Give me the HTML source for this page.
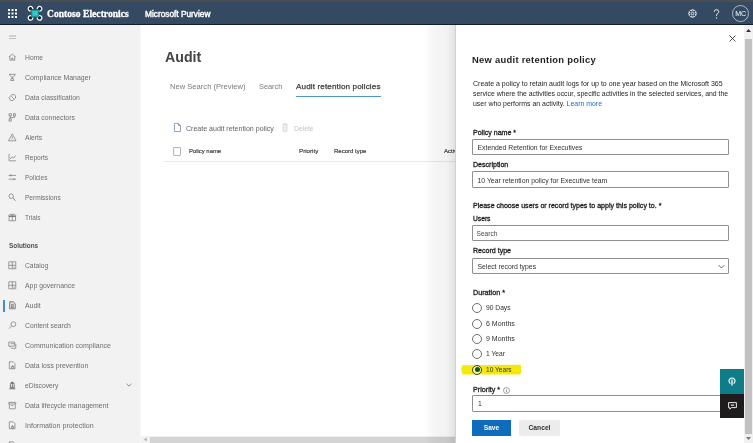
<!DOCTYPE html>
<html><head><meta charset="utf-8">
<style>
*{margin:0;padding:0;box-sizing:border-box}
html,body{width:753px;height:443px;overflow:hidden;background:#fff;-webkit-font-smoothing:antialiased;font-family:"Liberation Sans",sans-serif;color:#323130}
.a{position:absolute;white-space:nowrap}
.nav,.lbl,.inp,.rt,.a{will-change:transform}
.nav{position:absolute;left:25px;font-size:6.85px;color:#6e6e6e;line-height:10px;white-space:nowrap}
.lbl{position:absolute;left:17px;font-size:7.05px;-webkit-text-stroke:0.3px #1e1e1e;color:#1e1e1e;line-height:10px;white-space:nowrap}
.inp{position:absolute;left:16px;width:257px;border:1px solid #8f8f8f;border-radius:1px;padding-top:0.7px;font-size:6.85px;color:#323130;padding-left:4.5px;white-space:nowrap}
.rad{position:absolute;left:16px;width:10px;height:10px;border:1px solid #6e6e6e;border-radius:50%}
.rt{position:absolute;left:30px;font-size:6.7px;color:#323130;line-height:10px;white-space:nowrap}
</style></head><body>
<div class="a" style="left:0;top:0;width:753px;height:2px;background:#4b4e53"></div>
<div class="a" style="left:0;top:2px;width:753px;height:22px;background:#344a62"></div>
<div class="a" style="left:0;top:24px;width:753px;height:1px;background:#131e2a"></div>
<!-- waffle -->
<svg class="a" style="left:8px;top:9px" width="9" height="9" viewBox="0 0 9 9" fill="#fff">
<rect x="0" y="0" width="2" height="2"/><rect x="3.5" y="0" width="2" height="2"/><rect x="7" y="0" width="2" height="2"/>
<rect x="0" y="3.5" width="2" height="2"/><rect x="3.5" y="3.5" width="2" height="2"/><rect x="7" y="3.5" width="2" height="2"/>
<rect x="0" y="7" width="2" height="2"/><rect x="3.5" y="7" width="2" height="2"/><rect x="7" y="7" width="2" height="2"/>
</svg>
<!-- logo -->
<svg class="a" style="left:26px;top:5px" width="18" height="18" viewBox="0 0 18 18">
<circle cx="4.5" cy="3.7" r="2.3" fill="#16222e"/><circle cx="13.6" cy="3.7" r="2.3" fill="#16222e"/><circle cx="4.5" cy="12.9" r="2.3" fill="#16222e"/><circle cx="13.6" cy="12.9" r="2.3" fill="#16222e"/>
<path d="M5 4.4 Q9 5.4 13.1 4.4 Q12.1 8.3 13.1 12.2 Q9 11.2 5 12.2 Q6 8.3 5 4.4Z" fill="#1f9ea3"/>
<path d="M6.3 5.8 Q9 6.6 11.8 5.8 Q11.1 8.3 11.8 10.8 Q9 10 6.3 10.8 Q7 8.3 6.3 5.8Z" fill="#3cc9c6"/>
<path d="M4.90 5.97A2.3 2.3 0 1 1 6.77 4.10" fill="none" stroke="#fff" stroke-width="1.2"/>
<path d="M11.33 4.10A2.3 2.3 0 1 1 13.20 5.97" fill="none" stroke="#fff" stroke-width="1.2"/>
<path d="M6.77 12.50A2.3 2.3 0 1 1 4.90 10.63" fill="none" stroke="#fff" stroke-width="1.2"/>
<path d="M13.20 10.63A2.3 2.3 0 1 1 11.33 12.50" fill="none" stroke="#fff" stroke-width="1.2"/>
</svg>
<div class="a" style="left:47px;top:8px;font-family:'Liberation Serif',serif;font-weight:bold;font-size:9.5px;letter-spacing:0.05px;-webkit-text-stroke:0.3px #fff;color:#fff;line-height:12px">Contoso Electronics</div>
<div class="a" style="left:144.5px;top:8.5px;font-size:8.3px;-webkit-text-stroke:0.4px #fff;color:#fff;line-height:11px">Microsoft Purview</div>
<!-- header right icons -->
<svg class="a" style="left:688px;top:9px" width="9" height="9" viewBox="0 0 18 18"><path d="M14.24 7.01 L16.41 7.29 L16.41 10.71 L14.24 10.99 L14.11 11.30 L15.45 13.03 L13.03 15.45 L11.30 14.11 L10.99 14.24 L10.71 16.41 L7.29 16.41 L7.01 14.24 L6.70 14.11 L4.97 15.45 L2.55 13.03 L3.89 11.30 L3.76 10.99 L1.59 10.71 L1.59 7.29 L3.76 7.01 L3.89 6.70 L2.55 4.97 L4.97 2.55 L6.70 3.89 L7.01 3.76 L7.29 1.59 L10.71 1.59 L10.99 3.76 L11.30 3.89 L13.03 2.55 L15.45 4.97 L14.11 6.70Z" fill="none" stroke="#fff" stroke-width="1.7" stroke-linejoin="round"/><circle cx="9" cy="9" r="2.5" fill="none" stroke="#fff" stroke-width="1.6"/></svg>
<svg class="a" style="left:713px;top:8.5px" width="7" height="10" viewBox="0 0 7 10"><path d="M1.2 2.8C1.2 1.4 2.2 0.7 3.4 0.7S5.7 1.4 5.7 2.7C5.7 4.2 3.6 4.6 3.6 6.3V7" fill="none" stroke="#fff" stroke-width="0.95"/><circle cx="3.6" cy="8.9" r="0.6" fill="#fff"/></svg>
<div class="a" style="left:732px;top:5px;width:17px;height:17px;border:1px solid #aeb8c2;border-radius:50%;font-size:7px;color:#fff;text-align:center;line-height:15px;letter-spacing:-0.1px">MC</div>

<!-- sidebar -->
<div class="a" style="left:0;top:25px;width:141px;height:418px;background:linear-gradient(90deg,#f2f2f2 0,#f2f2f2 139.5px,#fcfcfc 141px)"></div>
<div class="a" style="left:9px;top:34.5px;width:7px;height:1px;background:#cfcfcf"></div>
<div class="a" style="left:9px;top:36.3px;width:7px;height:1px;background:#cfcfcf"></div>
<div class="a" style="left:9px;top:38px;width:7px;height:1px;background:#c0c0c0"></div>
<div class="nav" style="top:53px;font-size:6.78px">Home</div>
<svg class="a" style="left:8px;top:52.8px" width="8.6" height="8.6" viewBox="0 0 16 16"><path d="M1.5 7.5L8 2l6.5 5.5M3.5 6v7.5h3.5v-4h2v4h3.5V6" fill="none" stroke="#6c6c6c" stroke-width="1.2"/></svg>
<div class="nav" style="top:73px;font-size:6.93px">Compliance Manager</div>
<svg class="a" style="left:8px;top:72.8px" width="8.6" height="8.6" viewBox="0 0 16 16"><path d="M2 2.5h12M3 2.5c0 3 2.5 5 5 5s5-2 5-5M8 7.5v3M5 14h6l-1-3.5H6z" fill="none" stroke="#6c6c6c" stroke-width="1.2"/></svg>
<div class="nav" style="top:93px;font-size:6.81px">Data classification</div>
<svg class="a" style="left:8px;top:92.8px" width="8.6" height="8.6" viewBox="0 0 16 16"><path d="M2 8.5l5-5.5h5l2 2.5v4l-5 4.5H5z M6 6l5 5" fill="none" stroke="#6c6c6c" stroke-width="1.2"/></svg>
<div class="nav" style="top:113px;font-size:6.85px">Data connectors</div>
<svg class="a" style="left:8px;top:112.8px" width="8.6" height="8.6" viewBox="0 0 16 16"><rect x="2" y="1.5" width="4" height="4" fill="none" stroke="#6c6c6c" stroke-width="1.2"/><rect x="10" y="1.5" width="4" height="4" fill="none" stroke="#6c6c6c" stroke-width="1.2"/><rect x="2" y="11" width="4" height="4" fill="none" stroke="#6c6c6c" stroke-width="1.2"/><path d="M4 5.5v5.5M12 5.5v3H4" fill="none" stroke="#6c6c6c" stroke-width="1.2"/></svg>
<div class="nav" style="top:133px;font-size:6.72px">Alerts</div>
<svg class="a" style="left:8px;top:132.8px" width="8.6" height="8.6" viewBox="0 0 16 16"><path d="M8 1.5L15 14.5H1z M8 6v4.5M8 12v1" fill="none" stroke="#6c6c6c" stroke-width="1.2"/></svg>
<div class="nav" style="top:153px;font-size:6.6px">Reports</div>
<svg class="a" style="left:8px;top:152.8px" width="8.6" height="8.6" viewBox="0 0 16 16"><path d="M2 1.5v13h13M4 11l3.5-4 3 2.5 4-5" fill="none" stroke="#6c6c6c" stroke-width="1.2"/></svg>
<div class="nav" style="top:173px;font-size:6.5px">Policies</div>
<svg class="a" style="left:8px;top:172.8px" width="8.6" height="8.6" viewBox="0 0 16 16"><path d="M1 4.5h14M1 11.5h14M5 2.5v4M11 9.5v4" fill="none" stroke="#6c6c6c" stroke-width="1.2"/></svg>
<div class="nav" style="top:193px;font-size:6.56px">Permissions</div>
<svg class="a" style="left:8px;top:192.8px" width="8.6" height="8.6" viewBox="0 0 16 16"><circle cx="6" cy="6" r="4.2" fill="none" stroke="#6c6c6c" stroke-width="1.2"/><path d="M9 9l5.5 5.5M12 12l-1.5 1.5" fill="none" stroke="#6c6c6c" stroke-width="1.2"/></svg>
<div class="nav" style="top:213px;font-size:6.4px">Trials</div>
<svg class="a" style="left:8px;top:212.8px" width="8.6" height="8.6" viewBox="0 0 16 16"><path d="M2 6.5h12v8H2zM1.5 4h13v2.5h-13zM8 4v10.5M8 4C6 1 4 2 5 4M8 4c2-3 4-2 3 0" fill="none" stroke="#6c6c6c" stroke-width="1.2"/></svg>
<div class="nav" style="top:261px;font-size:6.76px">Catalog</div>
<svg class="a" style="left:8px;top:260.8px" width="8.6" height="8.6" viewBox="0 0 16 16"><path d="M1.5 1.5h13v13h-13zM1.5 8h13M8 1.5v13M10 10.5l2.5 2.5" fill="none" stroke="#6c6c6c" stroke-width="1.2"/></svg>
<div class="nav" style="top:281px;font-size:6.89px">App governance</div>
<svg class="a" style="left:8px;top:280.8px" width="8.6" height="8.6" viewBox="0 0 16 16"><path d="M1.5 1.5h13v13h-13zM1.5 8h13M8 1.5v13M10 10.5l2.5 2.5" fill="none" stroke="#6c6c6c" stroke-width="1.2"/></svg>
<div class="nav" style="top:301px;font-size:6.9px">Audit</div>
<svg class="a" style="left:8px;top:300.8px" width="8.6" height="8.6" viewBox="0 0 16 16"><path d="M3 1.5h7l3.5 3.5v9.5H3z M5.5 7h5M5.5 9.5h5M5.5 12h5" fill="#dcdcdc" stroke="#5a5a5a" stroke-width="1.3"/></svg>
<div class="nav" style="top:321px;font-size:6.77px">Content search</div>
<svg class="a" style="left:8px;top:320.8px" width="8.6" height="8.6" viewBox="0 0 16 16"><circle cx="10" cy="6" r="4.5" fill="none" stroke="#6c6c6c" stroke-width="1.2"/><path d="M6.8 9.2L1.5 14.5" fill="none" stroke="#6c6c6c" stroke-width="1.2"/></svg>
<div class="nav" style="top:341px;font-size:7.0px">Communication compliance</div>
<svg class="a" style="left:8px;top:340.8px" width="8.6" height="8.6" viewBox="0 0 16 16"><path d="M1.5 2h11v7.5h-7l-2 2v-2h-2z M5 5h7.5M14.5 5.5v8h-2v1.5l-2-1.5h-5" fill="none" stroke="#6c6c6c" stroke-width="1.2"/></svg>
<div class="nav" style="top:361px;font-size:6.95px">Data loss prevention</div>
<svg class="a" style="left:8px;top:360.8px" width="8.6" height="8.6" viewBox="0 0 16 16"><path d="M2.5 1.5h7l3.5 3.5v9.5H2.5z M6.5 10.5h4v3h-4zM7.5 10.5v-1.5h2v1.5" fill="none" stroke="#6c6c6c" stroke-width="1.2"/></svg>
<div class="nav" style="top:381px;font-size:6.75px">eDiscovery</div>
<svg class="a" style="left:8px;top:380.8px" width="8.6" height="8.6" viewBox="0 0 16 16"><path d="M8 1l5 4H3z" fill="#5e5e5e"/><path d="M2.5 14.5h11M3.5 12.5h9M4.5 6v6M8 6v6M11.5 6v6" fill="none" stroke="#5e5e5e" stroke-width="1.6"/></svg>
<div class="nav" style="top:401px;font-size:6.93px">Data lifecycle management</div>
<svg class="a" style="left:8px;top:400.8px" width="8.6" height="8.6" viewBox="0 0 16 16"><path d="M1.5 2.5h13v3h-13zM2.5 5.5v9h11v-9M6 8.5h4" fill="none" stroke="#6c6c6c" stroke-width="1.2"/></svg>
<div class="nav" style="top:421px;font-size:7.1px">Information protection</div>
<svg class="a" style="left:8px;top:420.8px" width="8.6" height="8.6" viewBox="0 0 16 16"><path d="M2.5 1.5h7l3.5 3.5v9.5H2.5z M6.5 10.5h4v3h-4zM7.5 10.5v-1.5h2v1.5" fill="none" stroke="#6c6c6c" stroke-width="1.2"/></svg>
<div class="nav" style="top:441px;font-size:6.9px">Insider risk management</div>
<svg class="a" style="left:8px;top:440.8px" width="8.6" height="8.6" viewBox="0 0 16 16"><path d="M2.5 1.5h7l3.5 3.5v9.5H2.5z" fill="none" stroke="#6c6c6c" stroke-width="1.2"/></svg>
<div class="nav" style="top:241px;left:8.5px;font-weight:bold;font-size:6.4px;color:#505050">Solutions</div>
<div class="a" style="left:2.7px;top:300px;width:2px;height:11.5px;background:#3d8fd0"></div>
<svg class="a" style="left:126px;top:383px" width="6" height="4" viewBox="0 0 6 4"><path d="M0.4 0.5L3 3.2L5.6 0.5" fill="none" stroke="#777" stroke-width="0.8"/></svg>

<!-- main -->
<div class="a" style="left:165px;top:48.7px;font-size:14.2px;font-weight:bold;color:#444;line-height:17px">Audit</div>
<div class="a" style="left:169.5px;top:81.5px;font-size:7.6px;color:#7a7a7a;line-height:10px">New Search (Preview)</div>
<div class="a" style="left:258.5px;top:81.5px;font-size:7.35px;color:#7a7a7a;line-height:10px">Search</div>
<div class="a" style="left:296px;top:81.6px;font-size:8.1px;letter-spacing:0.13px;-webkit-text-stroke:0.25px #3a3a3a;color:#3a3a3a;line-height:10px">Audit retention policies</div>
<div class="a" style="left:296px;top:96px;width:85px;height:1.2px;background:#4f95cf"></div>
<svg class="a" style="left:174px;top:123px" width="7" height="9" viewBox="0 0 7 9"><path d="M0.5 0.5h4l2 2v6h-6z M4.5 0.5v2h2" fill="none" stroke="#7590ab" stroke-width="0.8"/></svg>
<div class="a" style="left:185.5px;top:123.7px;font-size:7.05px;color:#5f5f5f;line-height:10px">Create audit retention policy</div>
<svg class="a" style="left:282px;top:123px" width="6" height="9" viewBox="0 0 6 9"><path d="M0.5 1.5h5M2 1.5v-1h2v1M1 1.5v7h4v-7" fill="#eee" stroke="#d8d8d8" stroke-width="0.8"/></svg>
<div class="a" style="left:293.5px;top:123.7px;font-size:6.8px;color:#c4c4c4;line-height:10px">Delete</div>
<div class="a" style="left:173px;top:147px;width:8px;height:8.5px;border:1px solid #b4b4b4;border-radius:1px"></div>
<div class="a" style="left:188.5px;top:146px;font-size:5.9px;-webkit-text-stroke:0.18px #3f3f3f;color:#3f3f3f;line-height:10px">Policy name</div>
<div class="a" style="left:298.5px;top:146px;font-size:6.2px;-webkit-text-stroke:0.18px #3f3f3f;color:#3f3f3f;line-height:10px">Priority</div>
<div class="a" style="left:333.5px;top:146px;font-size:6px;-webkit-text-stroke:0.18px #3f3f3f;color:#3f3f3f;line-height:10px">Record type</div>
<div class="a" style="left:443.5px;top:146px;font-size:6px;-webkit-text-stroke:0.18px #3f3f3f;color:#3f3f3f;line-height:10px">Activ</div>
<div class="a" style="left:164px;top:161px;width:292px;height:1px;background:#e9e9e9"></div>
<!-- h scrollbar -->
<div class="a" style="left:141px;top:436px;width:315px;height:7px;background:#f1f1f1"></div>
<svg class="a" style="left:143px;top:437px" width="5" height="5" viewBox="0 0 5 5"><path d="M3.5 0.8L1.2 2.5L3.5 4.2z" fill="#a0a0a0"/></svg>
<div class="a" style="left:150px;top:437px;width:306px;height:6px;background:#d4d4d4"></div>

<!-- panel shadow -->
<div class="a" style="left:425px;top:25px;width:31px;height:418px;background:linear-gradient(90deg,rgba(0,0,0,0) 0,rgba(0,0,0,.035) 25%,rgba(0,0,0,.05) 70%,rgba(0,0,0,.12) 100%)"></div>
<div class="a" style="left:455px;top:25px;width:289px;height:418px;background:#fff;border-left:1px solid #d0d0d0"></div>
<svg class="a" style="left:728.5px;top:35px" width="7" height="7" viewBox="0 0 7 7"><path d="M0.5 0.5L6.5 6.5M6.5 0.5L0.5 6.5" stroke="#3a3a3a" stroke-width="0.9"/></svg>
<div class="a" style="left:472px;top:52.8px;font-size:9.4px;letter-spacing:0.28px;font-weight:bold;color:#201f1e;line-height:14px">New audit retention policy</div>
<div class="a" style="left:472.5px;top:79px;font-size:7.03px;color:#252525;line-height:10px">Create a policy to retain audit logs for up to one year based on the Microsoft 365</div>
<div class="a" style="left:472.5px;top:88.8px;font-size:6.86px;color:#252525;line-height:10px">service where the activities occur, specific activities in the selected services, and the</div>
<div class="a" style="left:472.5px;top:98.6px;font-size:6.95px;color:#252525;line-height:10px">user who performs an activity. <span style="color:#1a6fb5">Learn more</span></div>

<div class="lbl" style="left:472.5px;top:128px">Policy name *</div>
<div class="inp" style="left:472px;top:139px;width:257px;height:16px;line-height:14px">Extended Retention for Executives</div>
<div class="lbl" style="left:472.5px;top:160px">Description</div>
<div class="inp" style="left:472px;top:171px;width:257px;height:17px;line-height:15px">10 Year retention policy for Executive team</div>
<div class="lbl" style="left:472.5px;top:201px">Please choose users or record types to apply this policy to. *</div>
<div class="lbl" style="left:472.5px;top:213.5px;font-size:6.7px">Users</div>
<div class="inp" style="left:472px;top:225px;width:257px;height:16px;line-height:14px;padding-left:3.5px;font-size:6.6px;color:#4a4a4a">Search</div>
<div class="lbl" style="left:472.5px;top:246px">Record type</div>
<div class="inp" style="left:472px;top:258px;width:257px;height:16px;line-height:14px">Select record types</div>
<svg class="a" style="left:718px;top:263.5px" width="7" height="5" viewBox="0 0 7 5"><path d="M0.5 1L3.5 4L6.5 1" fill="none" stroke="#444" stroke-width="0.8"/></svg>
<div class="lbl" style="left:472.5px;top:287.7px;font-size:7.2px">Duration *</div>
<svg class="a" style="left:459px;top:363px" width="65" height="13" viewBox="0 0 65 13"><path d="M3 2.3 L62 1.8 L62.5 9 L61 11.5 L3.5 11.6 L2.2 6 Z" fill="#f5e90c"/></svg>
<div class="rad" style="left:472px;top:303px"></div><div class="rt" style="left:485.5px;top:303px">90 Days</div>
<div class="rad" style="left:472px;top:318.5px"></div><div class="rt" style="left:485.5px;top:318.5px;font-size:7px">6 Months</div>
<div class="rad" style="left:472px;top:333.5px"></div><div class="rt" style="left:485.5px;top:333.5px;font-size:7px">9 Months</div>
<div class="rad" style="left:472px;top:349px"></div><div class="rt" style="left:485.5px;top:349px">1 Year</div>
<div class="rad" style="left:472px;top:364.5px;background:#fbf7b0;border-color:#3a3a20"></div><div class="rt" style="left:485.5px;top:364.5px;font-size:6.6px">10 Years</div>
<div class="a" style="left:474.5px;top:367px;width:5px;height:5px;border-radius:50%;background:#0b5a0b"></div>
<div class="lbl" style="left:472.5px;top:385px;font-size:7.2px">Priority *</div>
<svg class="a" style="left:502.5px;top:386.5px" width="7" height="7" viewBox="0 0 14 14"><circle cx="7" cy="7" r="6" fill="none" stroke="#555" stroke-width="1.1"/><path d="M7 6v4.5M7 3.6v1.2" stroke="#555" stroke-width="1.2"/></svg>
<div class="inp" style="left:472px;top:395px;width:257px;height:17px;line-height:15px;padding-left:5px;padding-top:0">1</div>
<div class="a" style="left:472px;top:420px;width:39px;height:16px;background:#0f6cbd;color:#fff;font-size:6.6px;font-weight:bold;text-align:center;line-height:16px">Save</div>
<div class="a" style="left:519px;top:420px;width:41px;height:16px;background:#ececec;color:#323130;font-size:6.7px;font-weight:bold;text-align:center;line-height:16px">Cancel</div>

<!-- floating buttons -->
<div class="a" style="left:720px;top:369px;width:24px;height:24.5px;background:#0f7d88"></div>
<svg class="a" style="left:727.7px;top:376.5px" width="8" height="9" viewBox="0 0 8 9"><path d="M2.50 6.60A3.0 3.0 0 1 1 5.50 6.60" fill="none" stroke="#fff" stroke-width="1.15"/><path d="M4 2.6V8.4" stroke="#fff" stroke-width="1.3"/></svg>
<div class="a" style="left:720px;top:393.5px;width:24px;height:24px;background:#1e1c1c"></div>
<svg class="a" style="left:727.5px;top:401.5px" width="9" height="8" viewBox="0 0 9 8"><path d="M0.6 0.6h7.8v5H3.3L1.8 7.2V5.6H0.6z" fill="none" stroke="#fff" stroke-width="0.9"/><path d="M2.8 3.1h3.4" stroke="#fff" stroke-width="1.1"/></svg>
<!-- v scrollbar -->
<div class="a" style="left:744px;top:25px;width:9px;height:418px;background:#f1f1f1"></div>
<svg class="a" style="left:745px;top:28px" width="7" height="5" viewBox="0 0 7 5"><path d="M3.5 1L6 4H1z" fill="#333"/></svg>
<div class="a" style="left:745px;top:39px;width:7px;height:395px;background:#c1c1c1"></div>
<svg class="a" style="left:745px;top:436px" width="7" height="5" viewBox="0 0 7 5"><path d="M3.5 4L6 1H1z" fill="#777"/></svg>
</body></html>
